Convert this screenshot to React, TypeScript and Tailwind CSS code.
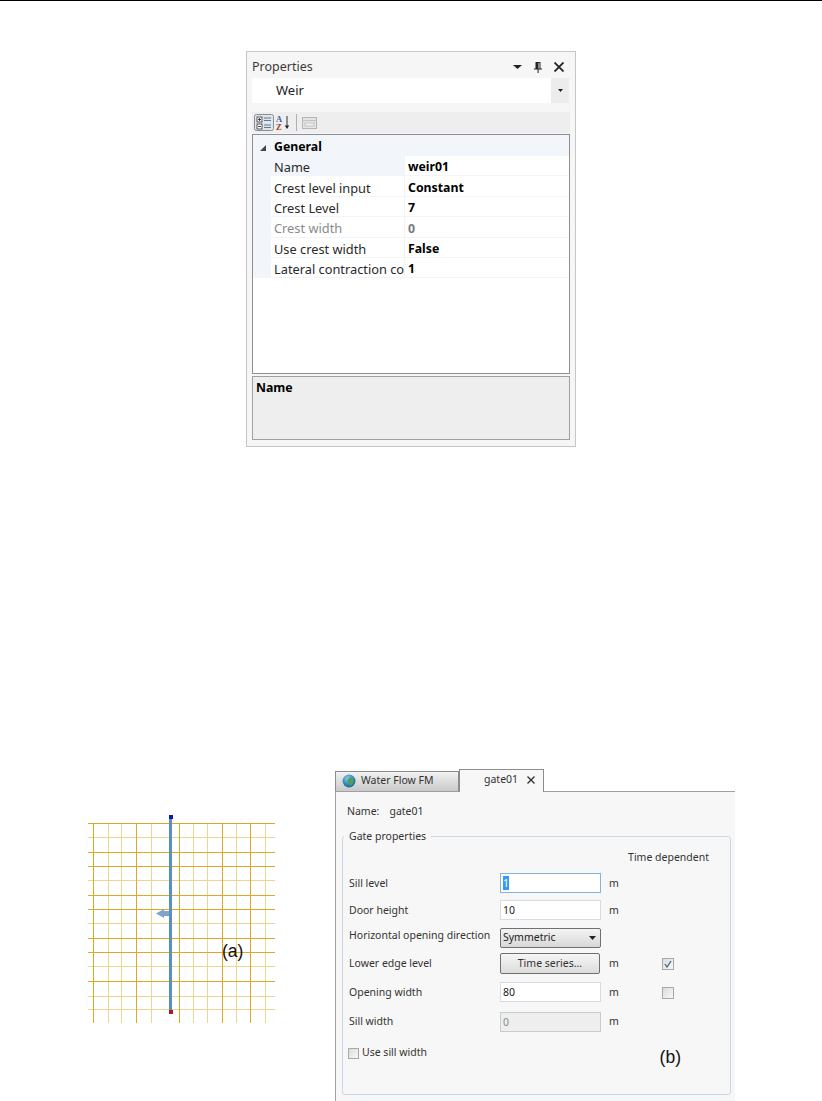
import React from "react";

const uiFont = "font-['Noto_Sans',sans-serif]";

const rows = [
  { label: "Name", value: "weir01", active: true },
  { label: "Crest level input", value: "Constant" },
  { label: "Crest Level", value: "7" },
  { label: "Crest width", value: "0", muted: true },
  { label: "Use crest width", value: "False" },
  { label: "Lateral contraction co", value: "1" },
];

const CategorizedIcon = () => (
  <svg width="20" height="17" viewBox="0 0 20 17">
    <rect x="0.5" y="0.5" width="19" height="16" rx="2" fill="#dfe5ee" stroke="#8a8f96" />
    <rect x="3" y="3" width="5" height="5" fill="#fff" stroke="#333" strokeWidth="0.8" />
    <rect x="3" y="10" width="5" height="5" fill="#fff" stroke="#333" strokeWidth="0.8" />
    <path d="M4 5.5h3M5.5 4v3M4 12.5h3" stroke="#222" strokeWidth="0.8" />
    <path d="M10 4h7M10 6.5h7M10 11h7M10 13.5h7" stroke="#68788c" strokeWidth="1" />
  </svg>
);

const SortIcon = () => (
  <svg width="15" height="17" viewBox="0 0 15 17">
    <text x="0" y="8" fontSize="8.5" fontWeight="700" fill="#3f5f9f" fontFamily="Liberation Serif">A</text>
    <text x="0" y="16" fontSize="8.5" fontWeight="700" fill="#a03838" fontFamily="Liberation Serif">Z</text>
    <path d="M11 2v11" stroke="#333" strokeWidth="1" />
    <path d="M8.8 11.5h4.4L11 15z" fill="#222" />
  </svg>
);

const PagesIcon = () => (
  <svg width="15" height="14" viewBox="0 0 15 14">
    <rect x="0.5" y="1.5" width="14" height="11" fill="#e4e4e4" stroke="#b4b4b4" />
    <path d="M0.5 4.5h14" stroke="#c4c4c4" />
    <rect x="3" y="7" width="9" height="3" fill="#f2f2f2" stroke="#bcbcbc" strokeWidth="0.8" />
  </svg>
);

const PropertiesPanel = () => (
  <div className={`ml-[246px] mt-[50px] flex h-[396px] w-[330px] flex-col border border-[#c4c6c8] bg-[#f6f6f6] px-[5px] ${uiFont}`}>
    <div className="flex h-[26px] items-center justify-between pr-[6px] pt-[4px]">
      <span className="text-[12.5px] text-[#3a3a3a]">Properties</span>
      <div className="flex items-center gap-[12px]">
        <svg width="9" height="4" viewBox="0 0 9 4">
          <path d="M0 0h9L4.5 4z" fill="#222" />
        </svg>
        <svg width="8" height="11" viewBox="0 0 8 11">
          <path d="M1.5 0h5v6.5H8v1H4.6V11h-1V7.5H0v-1h1.5zM4.5 1v5.5h1V1z" fill="#222" fillRule="evenodd" />
        </svg>
        <svg width="10" height="10" viewBox="0 0 10 10">
          <path d="M0.5 0.5l9 9M9.5 0.5l-9 9" stroke="#222" strokeWidth="1.8" />
        </svg>
      </div>
    </div>
    <div className="flex h-[25px] w-[317px] items-center bg-white">
      <span className="flex-1 pl-[24px] text-[13px] text-[#222]">Weir</span>
      <div className="flex h-[25px] w-[18px] items-center justify-center bg-[#ececec]">
        <svg width="5" height="3" viewBox="0 0 5 3">
          <path d="M0 0h5L2.5 3z" fill="#222" />
        </svg>
      </div>
    </div>
    <div className="mt-[9px] flex h-[21px] w-[318px] items-center gap-[2px] bg-[#eeeeee] pl-[2px]">
      <CategorizedIcon />
      <SortIcon />
      <div className="mx-[3px] h-[17px] w-px bg-[#b0b0b0]" />
      <PagesIcon />
    </div>
    <div className="mt-[1px] h-[240px] w-[318px] border border-[#8f8f8f] bg-white">
      <div className="flex h-[21px] items-center bg-[#f2f6fb] pt-[4px]">
        <svg className="ml-[7px] mr-[8px]" width="6" height="6" viewBox="0 0 6 6">
          <path d="M6 0v6H0z" fill="#444" />
        </svg>
        <span className="text-[12.3px] font-bold text-black">General</span>
      </div>
      {rows.map((row) => (
        <div key={row.label} className="flex h-[20.4px] items-center">
          <div className="h-full w-[18px] bg-[#f2f6fb]" />
          <div
            className={`flex h-full w-[133px] items-center overflow-hidden whitespace-nowrap border-b border-[#f1f4f8] pl-[3px] pt-[4px] text-[12.8px] ${
              row.active ? "bg-[#f2f6fb]" : "bg-white"
            } ${row.muted ? "text-[#8a8a8a]" : "text-[#2a2a2a]"}`}
          >
            {row.label}
          </div>
          <div
            className={`flex h-full flex-1 items-center border-b border-l border-[#f1f4f8] pl-[3px] pt-[4px] text-[12.3px] font-bold ${
              row.muted ? "text-[#7a7a7a]" : "text-black"
            }`}
          >
            {row.value}
          </div>
        </div>
      ))}
    </div>
    <div className="mt-[2px] h-[64px] w-[318px] border border-[#a0a0a0] bg-[#eeeeee] px-[3px] py-[2px]">
      <div className="text-[12.3px] font-bold leading-[18px] text-black">Name</div>
    </div>
  </div>
);

const darkV = [93, 136, 179, 222, 250];
const lightV = [108, 121, 151, 193, 207, 236, 265];
const darkH = [823, 852, 866, 895, 909, 938, 952, 981];
const lightH = [837, 880, 923, 966, 996, 1009];

const WeirMap = () => (
  <svg className="ml-[80px] mt-[47px] shrink-0" width="200" height="215" viewBox="80 815 200 215">
    {lightV.map((x) => (
      <line key={x} x1={x + 0.5} x2={x + 0.5} y1="823" y2="1023" stroke="#ecd493" />
    ))}
    {lightH.map((y) => (
      <line key={y} y1={y + 0.5} y2={y + 0.5} x1="88" x2="275" stroke="#ecd493" />
    ))}
    {darkV.map((x) => (
      <line key={x} x1={x + 0.5} x2={x + 0.5} y1="823" y2="1023" stroke="#dfa826" />
    ))}
    {darkH.map((y) => (
      <line key={y} y1={y + 0.5} y2={y + 0.5} x1="88" x2="275" stroke="#dfa826" />
    ))}
    <path d="M156 913.5l8-4.5v2h6v5h-6v2z" fill="#7fa6c9" />
    <rect x="169" y="817" width="3" height="194" fill="#5b8fbf" />
    <rect x="169" y="815" width="4" height="4" fill="#0a14c0" />
    <rect x="169" y="1010" width="4" height="4" fill="#b8141c" />
    <text x="222" y="957" fontSize="17.5" fill="#111" fontFamily="Liberation Sans">(a)</text>
  </svg>
);

const GlobeIcon = () => (
  <svg width="14" height="14" viewBox="0 0 14 14">
    <defs>
      <radialGradient id="globe" cx="0.4" cy="0.3" r="0.8">
        <stop offset="0" stopColor="#8ec8ea" />
        <stop offset="0.6" stopColor="#2a86b8" />
        <stop offset="1" stopColor="#145a8c" />
      </radialGradient>
    </defs>
    <circle cx="7" cy="7" r="6.5" fill="url(#globe)" />
    <path d="M7 4c2-1 4 0 5 2l-1 4-3 2-1-3-2-2z" fill="#4f9e5c" />
  </svg>
);

const fieldClass = "h-[20px] w-[101px] border px-[2px] leading-[18px]";

const Label = ({ children, className = "" }: { children: React.ReactNode; className?: string }) => (
  <div className={`w-[151px] shrink-0 whitespace-nowrap text-[#333] ${className}`}>{children}</div>
);

const Unit = ({ className = "ml-[8px]" }: { className?: string }) => (
  <span className={`w-[30px] text-[#333] ${className}`}>m</span>
);

const Check = ({ checked, className = "" }: { checked?: boolean; className?: string }) => (
  <div className={`ml-[23px] flex h-[12px] w-[12px] items-center justify-center border border-[#a8a8a8] bg-gradient-to-br from-[#dcdcdc] to-[#f8f8f8] ${className}`}>
    {checked && (
      <svg width="8" height="8" viewBox="0 0 8 8">
        <path d="M1 4l2 3 4-6" fill="none" stroke="#4a5f8f" strokeWidth="1.3" />
      </svg>
    )}
  </div>
);

const GateEditor = () => (
  <div className={`ml-[55px] w-[400px] text-[10.5px] ${uiFont}`}>
    <div className="flex h-[23px] items-end">
      <div className="flex h-[20px] w-[124px] items-center gap-[5px] border border-b-0 border-[#8c8c8c] bg-gradient-to-b from-[#f2f2f2] to-[#c9c9c9] pb-[2px] pl-[6px] text-[#333]">
        <GlobeIcon />
        <span>Water Flow FM</span>
      </div>
      <div className="relative top-[1px] flex h-[23px] w-[85px] items-center gap-[9px] border border-b-0 border-[#8c8c8c] bg-[#f7f7f7] pb-[2px] pl-[24px] text-[#333]">
        <span>gate01</span>
        <svg width="8" height="8" viewBox="0 0 8 8">
          <path d="M0.5 0.5l7 7M7.5 0.5l-7 7" stroke="#333" strokeWidth="1.4" />
        </svg>
      </div>
    </div>
    <div className="h-[311px] border-l border-t border-[#a0a0a0] bg-[#f7f7f7] pl-[6px] pr-[4px]">
      <div className="flex h-[37px] items-center gap-[10px] pl-[5px] pt-[3px] text-[#333]">
        <span>Name:</span>
        <span>gate01</span>
      </div>
      <div className="relative mt-[7px] h-[259px] rounded-[3px] border border-[#c8d8e6] pl-[6px]">
        <span className="absolute -top-[8px] left-[1px] bg-[#f7f7f7] px-[5px] text-[#333]">Gate properties</span>
        <div className="flex h-[32px] items-start justify-end pr-[21px] pt-[13px] text-[#333]">Time dependent</div>
        <div className="flex h-[27px] items-center">
          <Label className="mt-[2px]">Sill level</Label>
          <div className={`${fieldClass} border-[#84b4dc] bg-white text-[#222]`}>
            <span className="bg-[#3399ff] text-white">1</span>
          </div>
          <Unit className="ml-[8px] mt-[2px]" />
        </div>
        <div className="flex h-[27px] items-center">
          <Label className="mt-[2px]">Door height</Label>
          <div className={`${fieldClass} border-[#d4dde6] bg-white text-[#222]`}>10</div>
          <Unit className="ml-[8px] mt-[2px]" />
        </div>
        <div className="flex h-[29px] items-center">
          <Label className="-mt-[3px]">Horizontal opening direction</Label>
          <div className="flex h-[20px] w-[101px] items-center justify-between rounded-[2px] border border-[#707070] bg-gradient-to-b from-[#f4f4f4] to-[#d8d8d8] pl-[2px] pr-[4px] text-[#222]">
            <span>Symmetric</span>
            <svg width="7" height="4" viewBox="0 0 7 4">
              <path d="M0 0h7L3.5 4z" fill="#222" />
            </svg>
          </div>
        </div>
        <div className="flex h-[23px] items-center">
          <Label>Lower edge level</Label>
          <div className="flex h-[21px] w-[100px] items-center justify-center rounded-[2px] border border-[#707070] bg-gradient-to-b from-[#f6f6f6] to-[#dcdcdc] text-[#333]">
            Time series...
          </div>
          <Unit className="ml-[9px]" />
          <Check checked />
        </div>
        <div className="flex h-[33px] items-center">
          <Label className="mt-[3px]">Opening width</Label>
          <div className={`${fieldClass} border-[#d4dde6] bg-white text-[#222]`}>80</div>
          <Unit className="ml-[8px] mt-[3px]" />
          <Check className="mt-[3px]" />
        </div>
        <div className="flex h-[27px] items-center">
          <Label>Sill width</Label>
          <div className={`${fieldClass} border-[#c4ccd4] bg-[#eeeeee] text-[#8a8a8a]`}>0</div>
          <Unit />
        </div>
        <div className="mt-[10px] flex h-[16px] items-center gap-[3px] text-[#333]">
          <div className="-ml-[1px] h-[11px] w-[11px] border border-[#a8a8a8] bg-gradient-to-br from-[#dcdcdc] to-[#f8f8f8]" />
          <span>Use sill width</span>
          <span className="ml-auto mr-[49px] mt-[8px] font-['Liberation_Sans',sans-serif] text-[17.5px] leading-[16px] text-[#111]">(b)</span>
        </div>
      </div>
    </div>
  </div>
);

export default function App() {
  return (
    <div className="h-[1101px] w-[822px] overflow-hidden bg-white">
      <div className="h-px bg-black" />
      <PropertiesPanel />
      <div className="mt-[321px] flex">
        <WeirMap />
        <GateEditor />
      </div>
    </div>
  );
}
